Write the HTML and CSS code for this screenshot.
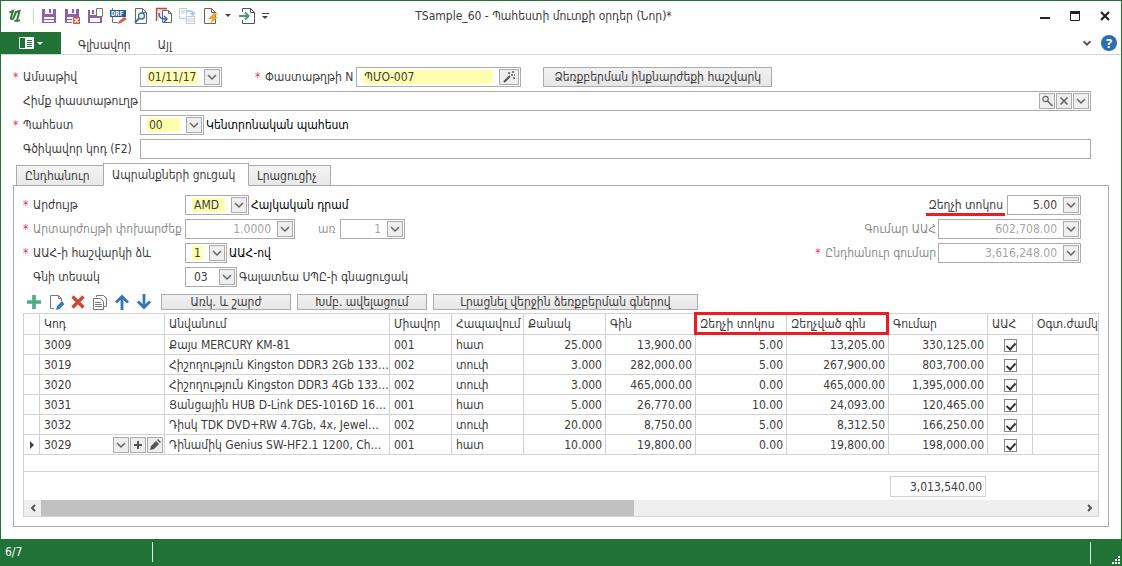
FILE: index.html
```
<!DOCTYPE html>
<html lang="hy">
<head>
<meta charset="utf-8">
<title>TSample_60 - Պահեստի մուտքի օրդեր (Նոր)*</title>
<link rel="stylesheet" href="styles.css">
</head>
<body>
<svg class="defs" aria-hidden="true">
  <symbol id="chev" viewBox="0 0 14 14"><path d="M3 5l4 4 4-4" fill="none" stroke="#666" stroke-width="1.500"/></symbol>
  <symbol id="page" viewBox="0 0 18 18"><path d="M3.500 1.500h7l4 4v11h-11zM10.500 1.500v4h4" fill="#fff" stroke="#666"/></symbol>
</svg>

<header class="titlebar">
  <div class="quick">
    <svg class="logo" viewBox="0 0 14 16"><path d="M1.500 4.500L5 3 3 9.500c-.5 2 1.500 2 2.500.5L8 4l3.500-1L9 12.500l-2.500.5M6 9l2-5.500" fill="none" stroke="#2f7a3c" stroke-width="2"/><path d="M9 13.500l3-1.500" stroke="#2f7a3c" stroke-width="1.500"/></svg>
    <i class="divider"></i>
    <button class="tool" aria-label="Save"><svg viewBox="0 0 18 18"><path d="M2 2h14v14H2z" fill="#8f5fb0"/><path d="M5 2h8v5H5zM4 10h10v5H4z" fill="#fff"/><path d="M9 2h2v4H9z" fill="#8f5fb0"/><path d="M4 12.500h10" stroke="#8f5fb0"/></svg></button>
    <button class="tool" aria-label="Save and close"><svg viewBox="0 0 18 18"><path d="M2 2h14v14H2z" fill="#8f5fb0"/><path d="M5 2h8v5H5zM4 10h12v6H4z" fill="#fff"/><path d="M9 2h2v4H9z" fill="#8f5fb0"/><path d="M4 12.500h5M2 15.500h7" stroke="#8f5fb0"/><path d="M10 10h7v7h-7z" fill="#e0563c"/><path d="M11.500 11.500l4 4m0-4l-4 4" stroke="#fff" stroke-width="1.400"/></svg></button>
    <button class="tool" aria-label="Save and new"><svg viewBox="0 0 18 18"><path d="M2 3h14v13H2z" fill="#8f5fb0"/><path d="M4 3h12v5H4zM4 11h10v4H4z" fill="#fff"/><path d="M6 3h2v4H6z" fill="#8f5fb0"/><path d="M10.500 1.500h6v8h-6z" fill="#fff" stroke="#777"/></svg></button>
    <button class="tool" aria-label="Draft"><svg viewBox="0 0 18 18"><path d="M3.500 1v8h10M3.500 10v5.500H9" fill="none" stroke="#777"/><path d="M1 3h16v7H1z" fill="#245b97"/><text class="draft" x="2" y="9">DRF</text><path d="M9 17l1-3 5-4 3 2-6 4z" fill="#dc6047"/></svg></button>
    <button class="tool" aria-label="Preview"><svg viewBox="0 0 18 18"><use href="#page"/><circle cx="9.500" cy="9" r="3" fill="#e6f0f8" stroke="#3470aa" stroke-width="1.300"/><path d="M7 11.500l-4 4" stroke="#3470aa" stroke-width="2"/></svg></button>
    <button class="tool" aria-label="Copy from"><svg viewBox="0 0 18 18"><path d="M1.500 14V1.500H12" fill="#f5dede" stroke="#b44b4b" stroke-width="1.400"/><path d="M7.500 3.500h6l3 3v9h-9z" fill="#fff" stroke="#666"/><path d="M13.500 3.500v3h3" fill="none" stroke="#666"/><path d="M4 6c0 5 2 6 7 6M9 9l3 3-3 3" fill="none" stroke="#3470aa" stroke-width="1.500"/></svg></button>
    <button class="tool" aria-label="Copy to" disabled><svg viewBox="0 0 18 18"><path d="M1.500 1.500h7v10h-7zM8 9.500h8.500v7H8zM8 12h8M8 14h8M3 4h4M3 6h4" fill="none" stroke="#c0ccd7"/><path d="M9 4h3q3 0 3 3M12 6l3 2 2-3" fill="none" stroke="#a6c4dc" stroke-width="1.300"/></svg></button>
    <button class="tool" aria-label="Actions"><svg viewBox="0 0 18 18"><use href="#page"/><path d="M13 6L7 12h4l-2 5 8-7h-4l4-4z" fill="#eba536"/></svg></button>
    <button class="caret" aria-label="More actions"></button>
    <button class="tool" aria-label="Export"><svg viewBox="0 0 18 18"><path d="M4.500 5V1.500h8l4 4v11h-12V13M12.500 1.500v4h4" fill="none" stroke="#555"/><path d="M1 9h9M7 5.500L10.500 9 7 12.500" fill="none" stroke="#3d9e75" stroke-width="2"/></svg></button>
    <button class="caret barred" aria-label="Customize toolbar"></button>
  </div>
  <h1 class="caption">TSample_60 - Պահեստի մուտքի օրդեր (Նոր)*</h1>
  <div class="window-buttons">
    <button aria-label="Minimize"><svg viewBox="0 0 12 12"><path d="M1 8h10" stroke="#222" stroke-width="2"/></svg></button>
    <button aria-label="Maximize"><svg viewBox="0 0 12 12"><path d="M1.500 2v8.500h9V2" fill="none" stroke="#222"/><path d="M1 2.500h10" stroke="#222" stroke-width="3"/></svg></button>
    <button aria-label="Close"><svg viewBox="0 0 12 12"><path d="M2 2l8 8M10 2l-8 8" stroke="#222" stroke-width="2.200"/></svg></button>
  </div>
</header>

<nav class="ribbon">
  <button class="menu-button" aria-label="Menu"><svg viewBox="0 0 24 14"><path d="M.5 1.500h14v11H.5z" fill="none" stroke="#fff"/><path d="M6 1h9v12H6z" fill="#fff"/><path d="M8 4.500h5M8 6.500h5M8 8.500h5M8 10.500h5" stroke="#217237"/><path d="M18 6h6l-3 3z" fill="#fff"/></svg></button>
  <a class="ribbon-tab" href="#main">Գլխավոր</a>
  <a class="ribbon-tab" href="#other">Այլ</a>
  <div class="ribbon-end">
    <button aria-label="Expand ribbon"><svg viewBox="0 0 14 14"><path d="M3 5l4 4 4-4" fill="none" stroke="#555" stroke-width="2.200"/></svg></button>
    <button class="help" aria-label="Help">?</button>
  </div>
</nav>

<main class="document">
  <div class="head-form">
    <div class="row">
      <label class="label required" for="date">Ամսաթիվ</label>
      <span class="field w-date"><input id="date" class="hot" value="01/11/17"><button class="pick" aria-label="Open calendar"><svg><use href="#chev"/></svg></button></span>
      <label class="label required inline" for="number">Փաստաթղթի N</label>
      <span class="field w-number"><input id="number" class="hot" value="ՊՄՕ-007"><button class="pick wide" aria-label="Generate number"><svg viewBox="0 0 14 14"><path d="M2 12l6-6" stroke="#555" stroke-width="2"/><path d="M6 3h2M10 2h2M9 5h2M12 5h1M11 8h2" stroke="#555" stroke-width="1.500"/></svg></button></span>
      <button class="command cost">Ձեռքբերման ինքնարժեքի հաշվարկ</button>
    </div>
    <div class="row">
      <label class="label" for="basis">Հիմք փաստաթուղթ</label>
      <span class="field grow"><input id="basis"><button class="pick" aria-label="Find"><svg viewBox="0 0 14 14"><circle cx="5.500" cy="5" r="2.700" fill="none" stroke="#666" stroke-width="1.200"/><path d="M7.500 7l5 5" stroke="#666" stroke-width="1.600"/></svg></button><button class="pick" aria-label="Clear"><svg viewBox="0 0 14 14"><path d="M3.500 3.500l7 7m0-7l-7 7" stroke="#666" stroke-width="1.600"/></svg></button><button class="pick" aria-label="Open list"><svg><use href="#chev"/></svg></button></span>
    </div>
    <div class="row">
      <label class="label required" for="store">Պահեստ</label>
      <span class="field w-store"><select id="store" class="hot"><option>00</option></select><span class="pick"><svg><use href="#chev"/></svg></span></span>
      <span class="hint">Կենտրոնական պահեստ</span>
    </div>
    <div class="row">
      <label class="label" for="barcode">Գծիկավոր կոդ (F2)</label>
      <span class="field grow"><input id="barcode"></span>
    </div>
  </div>

  <div class="tabs" role="tablist">
    <button class="tab t1" role="tab">Ընդհանուր</button>
    <button class="tab t2 active" role="tab" aria-selected="true">Ապրանքների ցուցակ</button>
    <button class="tab t3" role="tab">Լրացուցիչ</button>
  </div>

  <section class="panel" role="tabpanel">
    <div class="params">
      <div class="stack">
        <div class="row">
          <label class="label required" for="currency">Արժույթ</label>
          <span class="field w-cur"><select id="currency" class="hot"><option>AMD</option></select><span class="pick"><svg><use href="#chev"/></svg></span></span>
          <span class="hint">Հայկական դրամ</span>
        </div>
        <div class="row">
          <label class="label required dim" for="rate">Արտարժույթի փոխարժեք</label>
          <span class="field w-rate"><input id="rate" class="num" value="1.0000" disabled><button class="pick" aria-label="Calculator"><svg><use href="#chev"/></svg></button></span>
          <label class="per" for="per">առ</label>
          <span class="field w-per"><input id="per" class="num" value="1" disabled><button class="pick" aria-label="Calculator"><svg><use href="#chev"/></svg></button></span>
        </div>
        <div class="row">
          <label class="label required" for="vat">ԱԱՀ-ի հաշվարկի ձև</label>
          <span class="field w-vat"><select id="vat" class="hot"><option>1</option></select><span class="pick"><svg><use href="#chev"/></svg></span></span>
          <span class="hint">ԱԱՀ-ով</span>
        </div>
        <div class="row">
          <label class="label" for="price">Գնի տեսակ</label>
          <span class="field w-price"><select id="price"><option>03</option></select><span class="pick"><svg><use href="#chev"/></svg></span></span>
          <span class="hint soft">Գալատեա ՍՊԸ-ի գնացուցակ</span>
        </div>
      </div>
      <div class="stack totals">
        <div class="row">
          <label class="marked" for="discount">Զեղչի տոկոս</label>
          <span class="field w-disc"><input id="discount" class="num" value="5.00"><button class="pick" aria-label="Calculator"><svg><use href="#chev"/></svg></button></span>
        </div>
        <div class="row">
          <label class="dim" for="vatsum">Գումար ԱԱՀ</label>
          <span class="field w-sum"><input id="vatsum" class="num" value="602,708.00" disabled><button class="pick" aria-label="Calculator"><svg><use href="#chev"/></svg></button></span>
        </div>
        <div class="row">
          <label class="dim required" for="total">Ընդհանուր գումար</label>
          <span class="field w-sum"><input id="total" class="num" value="3,616,248.00" disabled><button class="pick" aria-label="Calculator"><svg><use href="#chev"/></svg></button></span>
        </div>
      </div>
    </div>

    <div class="toolbar">
      <div class="icons">
        <button aria-label="Add"><svg viewBox="0 0 16 16"><path d="M8 1v14M1 8h14" stroke="#4faa83" stroke-width="3.600"/></svg></button>
        <button aria-label="Edit"><svg viewBox="0 0 16 16"><path d="M6 14.500H2.500v-13h8l3 3V7M10.500 1.500v3h3" fill="none" stroke="#777"/><path d="M8 16l1-4 5-5 2.500 3-5 5z" fill="#3d7cb8"/></svg></button>
        <button aria-label="Delete"><svg viewBox="0 0 16 16"><path d="M2.500 2.500l11 11m0-11l-11 11" stroke="#d04a33" stroke-width="3.400"/></svg></button>
        <button aria-label="Copy"><svg viewBox="0 0 16 16"><path d="M4.500 3V1.500h7l3 3v8H12" fill="none" stroke="#777"/><path d="M1.500 4.500h7l3 3v8h-10zM3 8.500h6M3 10.500h7M3 12.500h7" fill="#fff" stroke="#777"/></svg></button>
        <button aria-label="Move up"><svg viewBox="0 0 16 16"><path d="M8 16V3M2 8.500L8 2.500l6 6" fill="none" stroke="#3476b5" stroke-width="2.800"/></svg></button>
        <button aria-label="Move down"><svg viewBox="0 0 16 16"><path d="M8 0v13M2 7.500l6 6 6-6" fill="none" stroke="#3476b5" stroke-width="2.800"/></svg></button>
      </div>
      <button class="command mid">Առկ. և շարժ</button>
      <button class="command mid">Խմբ. ավելացում</button>
      <button class="command long">Լրացնել վերջին ձեռքբերման գներով</button>
    </div>

    <div class="grid">
      <table>
        <colgroup><col class="c-mark"><col class="c-code"><col class="c-name"><col class="c-unit"><col class="c-short"><col class="c-qty"><col class="c-price"><col class="c-disc"><col class="c-net"><col class="c-sum"><col class="c-vat"><col></colgroup>
        <thead><tr><th></th><th>Կոդ</th><th>Անվանում</th><th>Միավոր</th><th>Հապավում</th><th>Քանակ</th><th>Գին</th><th class="framed first">Զեղչի տոկոս</th><th class="framed last">Զեղչված գին</th><th>Գումար</th><th>ԱԱՀ</th><th>Օգտ.ժամկ</th></tr></thead>
        <tbody>
          <tr><td></td><td>3009</td><td>Քայս MERCURY KM-81</td><td>001</td><td>հատ</td><td class="n">25.000</td><td class="n">13,900.00</td><td class="n">5.00</td><td class="n">13,205.00</td><td class="n">330,125.00</td><td class="tick"><input type="checkbox" checked aria-label="ԱԱՀ 3009"></td><td></td></tr>
          <tr><td></td><td>3019</td><td>Հիշողություն Kingston DDR3 2Gb 133…</td><td>002</td><td>տուփ</td><td class="n">3.000</td><td class="n">282,000.00</td><td class="n">5.00</td><td class="n">267,900.00</td><td class="n">803,700.00</td><td class="tick"><input type="checkbox" checked aria-label="ԱԱՀ 3019"></td><td></td></tr>
          <tr><td></td><td>3020</td><td>Հիշողություն Kingston DDR3 4Gb 133…</td><td>002</td><td>տուփ</td><td class="n">3.000</td><td class="n">465,000.00</td><td class="n">0.00</td><td class="n">465,000.00</td><td class="n">1,395,000.00</td><td class="tick"><input type="checkbox" checked aria-label="ԱԱՀ 3020"></td><td></td></tr>
          <tr><td></td><td>3031</td><td>Ցանցային HUB D-Link DES-1016D 16…</td><td>001</td><td>հատ</td><td class="n">5.000</td><td class="n">26,770.00</td><td class="n">10.00</td><td class="n">24,093.00</td><td class="n">120,465.00</td><td class="tick"><input type="checkbox" checked aria-label="ԱԱՀ 3031"></td><td></td></tr>
          <tr><td></td><td>3032</td><td>Դիսկ TDK DVD+RW 4.7Gb, 4x, Jewel…</td><td>002</td><td>տուփ</td><td class="n">20.000</td><td class="n">8,750.00</td><td class="n">5.00</td><td class="n">8,312.50</td><td class="n">166,250.00</td><td class="tick"><input type="checkbox" checked aria-label="ԱԱՀ 3032"></td><td></td></tr>
          <tr><td class="current"><svg viewBox="0 0 4 8"><path d="M0 0l4 4-4 4z" fill="#444"/></svg></td><td class="editor"><div><span>3029</span><button class="pick" aria-label="Open list"><svg><use href="#chev"/></svg></button><button class="pick" aria-label="Add"><svg viewBox="0 0 14 14"><path d="M7 3v8M3 7h8" stroke="#555" stroke-width="2"/></svg></button><button class="pick" aria-label="Edit"><svg viewBox="0 0 14 14"><path d="M2 12l1-4 5-5 3 3-5 5zM9 2l1-1 3 3-1 1z" fill="#555"/></svg></button></div></td><td>Դինամիկ Genius SW-HF2.1 1200, Ch…</td><td>001</td><td>հատ</td><td class="n">10.000</td><td class="n">19,800.00</td><td class="n">0.00</td><td class="n">19,800.00</td><td class="n">198,000.00</td><td class="tick"><input type="checkbox" checked aria-label="ԱԱՀ 3029"></td><td></td></tr>
        </tbody>
        <tfoot>
          <tr class="spacer"><td colspan="12"></td></tr>
          <tr class="sum"><td colspan="9"></td><td><output>3,013,540.00</output></td><td colspan="2"></td></tr>
        </tfoot>
      </table>
      <div class="scroll">
        <button aria-label="Scroll left"><svg viewBox="0 0 8 8"><path d="M6 1L3 4l3 3" fill="none" stroke="#555" stroke-width="2"/></svg></button>
        <div class="track"><div class="thumb"></div></div>
        <button aria-label="Scroll right"><svg viewBox="0 0 8 8"><path d="M2 1l3 3-3 3" fill="none" stroke="#555" stroke-width="2"/></svg></button>
      </div>
    </div>
  </section>
</main>

<footer class="status">
  <span class="position">6/7</span>
  <span class="grip"><svg viewBox="0 0 8 8"><path d="M6 0h2v2H6zM3 3h2v2H3zM6 3h2v2H6zM0 6h2v2H0zM3 6h2v2H3zM6 6h2v2H6z" fill="#fff"/></svg></span>
</footer>
</body>
</html>
```
FILE: styles.css
```
:root {
  --green: #217237;
  --line: #ababab;
  --grid: #d2d2d2;
  --ink: #3c3c3c;
}
* { box-sizing: border-box; }
body {
  margin: 0;
  min-height: 100vh;
  display: flex;
  flex-direction: column;
  border: 1px solid var(--green);
  border-bottom: 0;
  background: #fff;
  color: var(--ink);
  font: 12px/16px "DejaVu Sans Condensed", "DejaVu Sans", sans-serif;
}
button, input, select { font: inherit; color: inherit; margin: 0; padding: 0; border: 0; background: none; border-radius: 0; }
svg { display: block; }
.defs { position: absolute; width: 0; height: 0; }

.titlebar { display: grid; grid-template-columns: 1fr auto 1fr; align-items: center; height: 29px; padding: 0 10px 0 7px; margin-bottom: 2px; }
.quick { display: flex; align-items: center; }
.logo { width: 14px; height: 16px; }
.divider { width: 1px; height: 14px; background: #ccc; margin: 0 3px 0 11px; }
.tool { width: 23px; height: 18px; display: flex; justify-content: center; }
.tool svg { width: 18px; height: 18px; }
.draft { font: bold 7px "DejaVu Sans Mono", monospace; fill: #fff; }
.caret { width: 14px; height: 12px; display: flex; flex-direction: column; align-items: center; justify-content: center; gap: 2px; }
.caret::after { content: ""; border: 3px solid transparent; border-top-color: #444; border-bottom: 0; }
.caret.barred::before { content: ""; width: 7px; height: 1px; background: #444; }
.caption { margin: 0; padding-right: 32px; font-size: 12px; font-weight: normal; }
.window-buttons { display: flex; justify-content: flex-end; gap: 18px; }
.window-buttons button, .window-buttons svg { width: 12px; height: 12px; }

.ribbon { display: flex; height: 23px; border-bottom: 1px solid #d4d4d4; }
.menu-button { width: 60px; display: flex; align-items: center; justify-content: center; background: var(--green); }
.menu-button svg { width: 24px; height: 14px; }
.ribbon-tab { padding: 5px 0 0 17px; margin-right: 10px; color: inherit; text-decoration: none; }
.ribbon-end { display: flex; align-items: center; gap: 8px; margin-left: auto; padding-right: 4px; }
.ribbon-end svg { width: 12px; height: 12px; }
.help { width: 16px; height: 16px; border-radius: 50%; background: #2a6db3; color: #fff; font: bold 13px/16px "Open Sans", sans-serif; }

.document { flex: 1; display: flex; flex-direction: column; padding: 12px; }
.row { display: flex; align-items: center; height: 20px; }
.head-form { display: grid; gap: 4px; padding-right: 18px; }
.label { flex: none; width: 127px; padding-left: 10px; white-space: nowrap; }
.required::before { content: "*"; color: #f33; display: inline-block; width: 10px; }
.label.required { padding-left: 0; }
.label.inline { width: auto; padding: 0 3px 0 33px; }
.dim { color: #8c8c8c; }
.field { display: flex; align-items: center; gap: 1px; height: 20px; padding: 1px; border: 1px solid var(--line); background: #fff; }
.field input, .field select { flex: 1; min-width: 0; width: 0; height: 14px; margin: 0 5px; padding: 0 1px; line-height: 14px; appearance: none; outline: 0; }
.field .hot { background: #ffffb0; }
.field .num { text-align: right; margin-left: 0; padding: 0; }
.field input:disabled { color: #a5a5a5; }
.field select { padding-left: 2px; }
.pick { flex: none; width: 16px; height: 16px; display: flex; align-items: center; justify-content: center; border: 1px solid var(--line); background: #eee; }
.pick svg { width: 14px; height: 14px; }
.pick.wide { width: 20px; }
.grow { flex: 1; }
.w-date { width: 82px; }
.w-number { width: 165px; }
.w-store, .w-cur { width: 64px; }
.w-rate { width: 110px; }
.w-per { width: 65px; }
.w-vat { width: 42px; }
.w-price { width: 52px; }
.w-disc { width: 74px; }
.w-sum { width: 143px; }
.hint { margin-left: 2px; color: #000; white-space: nowrap; }
.hint.soft { color: var(--ink); }
.command { height: 16px; border: 1px solid var(--line); background: linear-gradient(#f2f2f2, #e6e6e6); line-height: 14px; white-space: nowrap; }
.cost { height: 20px; width: 229px; margin-left: 22px; }

.tabs { display: flex; align-items: flex-end; height: 23px; margin: 4px 0 -1px 3px; z-index: 1; }
.tab { height: 21px; padding-left: 8px; border: 1px solid var(--line); background: linear-gradient(#f4f4f4, #e8e8e8); text-align: left; white-space: nowrap; }
.tab.active { height: 23px; background: #fff; border-bottom-color: #fff; }
.t1 { width: 87px; border-right: 0; }
.t2 { width: 146px; }
.t3 { width: 82px; border-left: 0; }

.panel { flex: 1; display: flex; flex-direction: column; border: 1px solid var(--line); padding: 9px; }
.params { display: flex; justify-content: space-between; padding-right: 18px; }
.stack { display: grid; gap: 4px; align-content: start; }
.stack .label { width: 162px; }
.per { width: 45px; padding-left: 23px; color: #999; }
.totals .row { justify-content: flex-end; gap: 2px; }
.marked { padding: 3px 2px 0; border-bottom: 3px solid #ed1c24; }

.toolbar { display: flex; align-items: center; gap: 6px; margin: 7px 0 3px; }
.icons { display: flex; gap: 6px; width: 132px; padding-left: 3px; }
.icons button, .icons svg { width: 16px; height: 16px; }
.mid { width: 130px; }
.long { width: 265px; }

.grid { flex: 1; display: flex; flex-direction: column; border: 1px solid var(--grid); }
table { width: 100%; table-layout: fixed; border-spacing: 0; }
.c-mark { width: 16px; }
.c-code { width: 125px; }
.c-name { width: 225px; }
.c-unit { width: 62px; }
.c-short { width: 72px; }
.c-qty { width: 82px; }
.c-price { width: 90px; }
.c-disc { width: 91px; }
.c-net { width: 102px; }
.c-sum { width: 99px; }
.c-vat { width: 45px; }
th, td { height: 20px; padding: 0 0 0 4px; border: solid var(--grid); border-width: 0 1px 1px 0; font-weight: normal; text-align: left; white-space: nowrap; overflow: hidden; }
th { height: 21px; }
th:last-child, td:last-child { border-right: 0; }
.n { text-align: right; padding-right: 3px; }
.framed { position: relative; overflow: visible; }
.framed::after { content: ""; position: absolute; inset: -2px -1px -1px 0; border: solid #ed1c24; border-width: 3px 0; }
.framed.first::after { left: -2px; border-left-width: 3px; }
.framed.last::after { border-right-width: 3px; }
.tick { padding: 0; text-align: center; }
.tick input { appearance: none; display: block; width: 13px; height: 13px; margin: 1px auto 0; border: 1px solid #888; }
.tick input:checked::after { content: ""; display: block; width: 4px; height: 7px; margin: 1px 0 0 3px; border: solid #333; border-width: 0 2px 2px 0; transform: rotate(42deg); }
.current { padding: 0; }
.current svg { width: 4px; height: 8px; margin-left: 6px; }
.editor { padding-right: 1px; }
.editor div { display: flex; align-items: center; gap: 1px; }
.editor span { flex: 1; }
.spacer td { height: 17px; }
.sum td { height: 28px; padding: 0 2px 0 1px; border: 0; }
output { display: block; height: 21px; padding: 2px 3px; border: 1px solid var(--grid); text-align: right; }
.scroll { display: flex; height: 16px; margin-top: auto; background: #efefef; }
.scroll button { width: 17px; display: flex; align-items: center; justify-content: center; }
.scroll svg { width: 8px; height: 8px; }
.track { flex: 1; }
.thumb { width: 57%; height: 100%; background: #c0c0c0; }

.status { display: flex; align-items: stretch; height: 27px; padding: 3px 1px 2px 4px; background: var(--green); color: #fff; }
.position { width: 148px; padding-top: 2px; margin-bottom: 2px; border-right: 1px solid #e0ece2; }
.grip { display: flex; align-items: flex-end; justify-content: flex-end; width: 30px; margin-left: auto; border-left: 1px solid #e0ece2; }
.grip svg { width: 8px; height: 8px; }
```
